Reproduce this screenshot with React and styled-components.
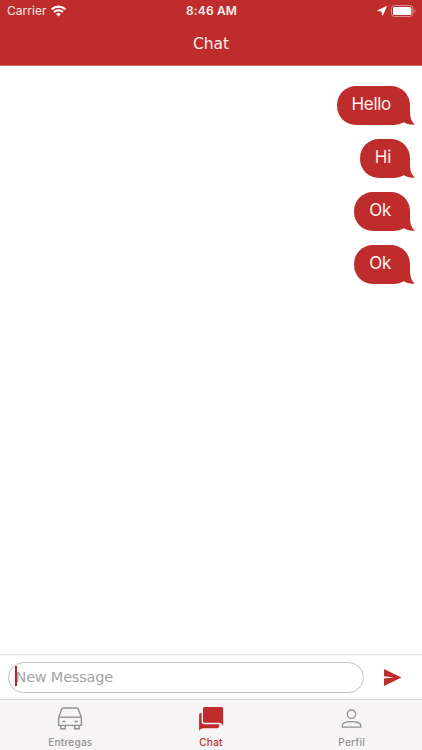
import { useState } from 'react';
import styled, { createGlobalStyle } from 'styled-components';

const RED = '#be2d2c';
const GREY = '#929192';

const GlobalStyle = createGlobalStyle`
  * {
    box-sizing: border-box;
  }

  body {
    margin: 0;
    background: #fff;
    font-family: Inter, 'Liberation Sans', sans-serif;
  }
`;

const Screen = styled.div`
  display: flex;
  flex-direction: column;
  width: 100%;
  height: 100vh;
  overflow: hidden;
  background: #fff;
`;

const Header = styled.header`
  flex: none;
  height: 66px;
  background: ${RED};
  border-bottom: 1px solid #cc5f60;
  color: #fff;
`;

const StatusBar = styled.div`
  display: grid;
  grid-template-columns: 1fr auto 1fr;
  align-items: center;
  height: 22px;
  padding: 0 6px 0 7px;
`;

const Carrier = styled.div`
  display: flex;
  align-items: center;
  gap: 4px;
  font-size: 12px;
  line-height: 22px;
  letter-spacing: 0.05px;
  color: #fbe9e9;
`;

const Clock = styled.div`
  font-size: 12px;
  font-weight: 600;
  line-height: 22px;
  letter-spacing: 0.15px;
  color: #fdf0f0;
`;

const StatusIcons = styled.div`
  display: flex;
  justify-content: flex-end;
  align-items: center;
  gap: 4px;
`;

const Title = styled.h1`
  margin: 0;
  font-family: 'DejaVu Sans', sans-serif;
  font-size: 15.5px;
  font-weight: 400;
  line-height: 44px;
  letter-spacing: -0.1px;
  text-align: center;
  color: #fdeeee;
`;

const MessageList = styled.main`
  flex: 1;
  display: flex;
  flex-direction: column;
  align-items: flex-end;
  gap: 14.5px;
  padding: 20px 12.5px 0;
`;

const Bubble = styled.div`
  position: relative;
  height: 38.5px;
  padding: 0 18.5px 0 14.8px;
  border-radius: 19px;
  background: ${RED};
  color: #fdf1f1;
  font-size: 17px;
  line-height: 36px;
  letter-spacing: -0.3px;
`;

const Tail = styled.svg`
  position: absolute;
  right: -5px;
  bottom: 0;
`;

const Composer = styled.form`
  flex: none;
  display: flex;
  align-items: center;
  height: 45px;
  padding: 0 20px 0 8px;
  border-top: 1px solid #dededf;
`;

const InputBox = styled.label`
  display: flex;
  align-items: center;
  width: 356px;
  height: 31px;
  padding: 0 6px;
  border: 1px solid #c3c2c3;
  border-radius: 16px;
`;

const Caret = styled.span`
  flex: none;
  z-index: 1;
  width: 2px;
  height: 20px;
  margin-top: -3px;
  background: #b8222d;
`;

const Input = styled.input`
  flex: 1;
  min-width: 0;
  margin-left: -1.5px;
  padding: 0;
  border: none;
  outline: none;
  background: transparent;
  font-family: 'DejaVu Sans', sans-serif;
  font-size: 14.5px;
  line-height: 20px;
  letter-spacing: -0.22px;
  color: #333;

  &::placeholder {
    color: #a3a3a3;
    opacity: 1;
  }
`;

const SendButton = styled.button`
  display: flex;
  margin-left: 20px;
  padding: 0;
  border: none;
  background: none;
  cursor: pointer;
`;

const TabBar = styled.nav`
  flex: none;
  display: flex;
  height: 51px;
  background: #f6f4f5;
  border-top: 1px solid #d5d3d4;
`;

const Tab = styled.button`
  flex: 1;
  display: flex;
  flex-direction: column;
  align-items: center;
  padding: 6px 0 0;
  border: none;
  background: none;
  color: ${({ $active }) => ($active ? RED : GREY)};
  cursor: pointer;
`;

const TabLabel = styled.span`
  margin-top: 3px;
  font-family: Inter, sans-serif;
  font-size: 10px;
  font-weight: 500;
  line-height: 14px;
  letter-spacing: 0.25px;
`;

const WifiIcon = () => (
  <svg width="15" height="12" viewBox="0 0 15 12" fill="none" stroke="#fff">
    <path d="M0.7 4.5a9.6 9.6 0 0 1 13.6 0" strokeWidth="2.3" />
    <path d="M3.1 7.1a6.2 6.2 0 0 1 8.8 0" strokeWidth="2.1" />
    <path d="M7.5 11.5 5.1 9.1a3.4 3.4 0 0 1 4.8 0z" fill="#fff" stroke="none" />
  </svg>
);

const LocationIcon = () => (
  <svg width="10" height="10" viewBox="0 0 10 10" fill="#fff" stroke="#fff" strokeWidth="0.9" strokeLinejoin="round">
    <path d="M9.4 0.6 5.5 9.2 4.9 5.2 0.8 4.6z" />
  </svg>
);

const BatteryIcon = () => (
  <svg width="25" height="12" viewBox="0 0 25 12">
    <rect x="0.5" y="0.5" width="21.4" height="11" rx="3" fill="none" stroke="#e08f8f" />
    <rect x="2" y="2" width="18.4" height="8" rx="1.6" fill="#fff" />
    <path d="M23.2 4.2c1.7.5 1.7 3.1 0 3.6z" fill="#e08f8f" />
  </svg>
);

const SendIcon = () => (
  <svg width="18" height="17" viewBox="0 0 18 17" fill={RED}>
    <path d="M0 0 17.5 8.4 0 17V9.6L10 8.4 0 7.2z" />
  </svg>
);

const CarIcon = () => (
  <svg width="26" height="26" viewBox="0 0 26 26" fill="none" stroke="currentColor" strokeWidth="1.4">
    <path d="M1.6 11.4 4.6 3.2Q5 2 6.2 2H19.8Q21 2 21.4 3.2L24.4 11.4V19.4H1.6z" strokeLinejoin="round" />
    <path d="M2 11.2H24" />
    <path d="M5.2 15.5h3.2M17.6 15.5h3.2" />
    <path d="M3.8 19.3v3.4h4.5v-3.4M17.7 19.3v3.4h4.5v-3.4" />
  </svg>
);

const ChatIcon = () => (
  <svg width="26" height="26" viewBox="0 0 26 26" fill="currentColor">
    <path d="M6.6 1.1H23.5Q25.2 1.1 25.2 2.8V19.8C24.2 18 22.9 16.8 20.8 16.8H6.6Q5 16.8 5 15.2V2.8Q5 1.1 6.6 1.1z" />
    <path d="M3.6 6.8V15.6Q3.6 18.3 6.3 18.3H20.8C22 19.4 21.3 22.2 18.9 22.2H5.6C3.6 22.2 2.2 23.2 1.1 25V9Q1.1 7 3.6 6.8z" />
  </svg>
);

const PersonIcon = () => (
  <svg width="26" height="26" viewBox="0 0 26 26" fill="none" stroke="currentColor" strokeWidth="1.3">
    <circle cx="12.5" cy="8.2" r="4.2" />
    <path d="M3.4 21.2V19.3C3.4 16.9 7.9 15.6 12.5 15.6S21.7 16.9 21.7 19.3V21.2z" />
  </svg>
);

const messages = [
  { id: 1, text: 'Hello' },
  { id: 2, text: 'Hi' },
  { id: 3, text: 'Ok' },
  { id: 4, text: 'Ok' },
];

const tabs = [
  { name: 'Entregas', icon: CarIcon },
  { name: 'Chat', icon: ChatIcon },
  { name: 'Perfil', icon: PersonIcon },
];

const App = () => {
  const [activeTab, setActiveTab] = useState('Chat');
  const [draft, setDraft] = useState('');

  return (
    <Screen>
      <GlobalStyle />
      <Header>
        <StatusBar>
          <Carrier>
            Carrier
            <WifiIcon />
          </Carrier>
          <Clock>8:46 AM</Clock>
          <StatusIcons>
            <LocationIcon />
            <BatteryIcon />
          </StatusIcons>
        </StatusBar>
        <Title>Chat</Title>
      </Header>

      <MessageList>
        {messages.map((message) => (
          <Bubble key={message.id}>
            {message.text}
            <Tail width="24" height="20" viewBox="0 0 24 20" fill={RED}>
              <path d="M19 0V5C19 12 19.8 15.8 24 19.6C19.4 20 15.8 19.2 12.8 17.2C10.2 18.8 6.5 20 1 20V0z" />
            </Tail>
          </Bubble>
        ))}
      </MessageList>

      <Composer onSubmit={(e) => e.preventDefault()}>
        <InputBox>
          <Caret />
          <Input
            value={draft}
            placeholder="New Message"
            onChange={(e) => setDraft(e.target.value)}
          />
        </InputBox>
        <SendButton type="submit" aria-label="Send">
          <SendIcon />
        </SendButton>
      </Composer>

      <TabBar>
        {tabs.map(({ name, icon: Icon }) => (
          <Tab key={name} $active={name === activeTab} onClick={() => setActiveTab(name)}>
            <Icon />
            <TabLabel>{name}</TabLabel>
          </Tab>
        ))}
      </TabBar>
    </Screen>
  );
};

export default App;
